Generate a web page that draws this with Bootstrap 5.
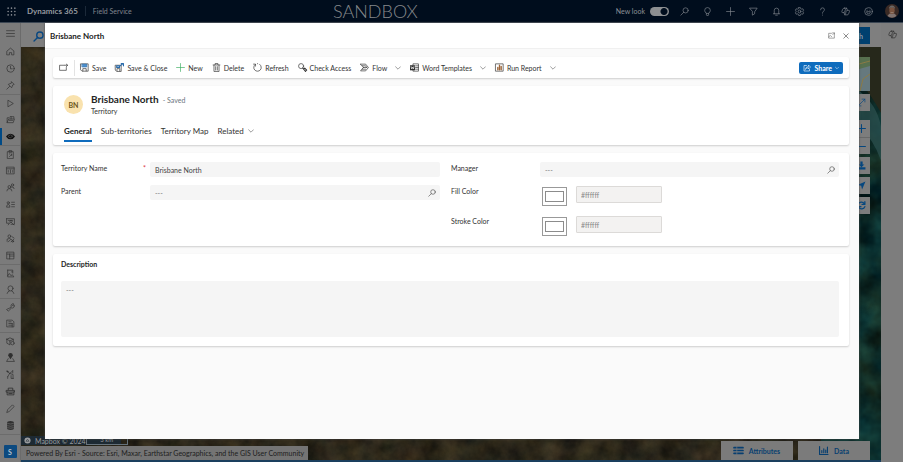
<!DOCTYPE html>
<html lang="en">
<head>
<meta charset="utf-8">
<meta name="viewport" content="width=device-width, initial-scale=1">
<title>Brisbane North - Dynamics 365</title>
<link href="https://cdn.jsdelivr.net/npm/bootstrap@5.3.0/dist/css/bootstrap.min.css" rel="stylesheet">
<style>
  body { font-family: Lato, "Open Sans", sans-serif; font-size: 7px; line-height: 10px; color: #333; background: #7d7d7d; }
  button, input, textarea { font: inherit; color: inherit; }
  button { border: 0; background: none; padding: 0; }
  a { color: inherit; text-decoration: none; }
  svg { display: block; flex: none; }
  .ic { width: 9px; height: 9px; fill: none; stroke: currentColor; stroke-width: 1.2; stroke-linecap: round; stroke-linejoin: round; overflow: visible; }
  .ic .solid { fill: currentColor; stroke: none; }

  .topbar { height: 23px; background: #000d1d; color: #8c9096; border-bottom: 1px solid #3b4653; }
  .topbar-start { flex: 0 0 333px; padding-left: 7px; }
  .product { font-size: 8px; font-weight: 700; padding: 0 7px 0 11px; color: #969a9f; }
  .area { border-left: 1px solid #1b2939; padding-left: 7px; color: #81868d; }
  .env { font-size: 18px; line-height: 22px; font-weight: 300; color: #85888b; }
  .top-icon { width: 23px; height: 22px; color: #7f858c; }
  .switch-track { appearance: none; width: 19px; height: 9px; border-radius: 5px; background: radial-gradient(circle at 14px 50%, #000d1d 3px, transparent 4px) #8d8f91; margin: 0 4px 0 5px; }

  .siderail { width: 21px; background: #7b7b7b; color: #303030; border-right: 1px solid #6b6b6b; }
  .siderail a { height: 17px; }
  .siderail .menu-btn { height: 20px; }
  .siderail .split { border-top: 1px solid #6c6c6c; }
  .siderail .current { box-shadow: inset 2px 0 0 #004a86; color: #111; }
  .siderail .end-split { border-top: 1px solid #6c6c6c; padding-top: 10px; }
  .area-tile { width: 13px; height: 13px; background: #0c4a80; color: #b9c5d0; border-radius: 1px; font-weight: 700; }
  .copilot-rail { width: 22px; background: #7d7d7d; color: #2d2d2d; padding-top: 7px; }

  .map-search { height: 24px; background: #7f7f7f; padding: 4px 11px 3px 12px; color: #0a4880; }
  .map-search svg { stroke-width: 2; }
  .map-search button { background: #00406f; color: #8c9ba8; padding: 0 7px; font-weight: 700; }
  .map-area { overflow: hidden; border-bottom: 2px solid #1a3f5e; background: #29281c; }
  .map-picture { position: absolute; inset: 0; width: 100%; height: 100%; }
  .map-tools { position: absolute; top: 10px; right: 11px; width: 17px; color: #06477f; }
  .map-tools button, .map-thumb { background: #7d7d7d; height: 17px; }
  .map-tools button { margin-top: 3px; }
  .map-tools .zoom-in { margin-top: 9px; }
  .map-tools .zoom-out { margin-top: 0; border-top: 1px solid #696969; }
  .map-thumb { height: 34px; }
  .map-credit { position: absolute; left: 0; bottom: 0; color: #8f949a; }
  .credit-small { height: 9px; width: 100px; background: #1d2a33; padding-left: 3px; color: #9a9c9e; white-space: nowrap; }
  .scale-box { width: 42px; height: 8px; border: 1px solid #66737c; border-top: 0; font-size: 6px; line-height: 6px; }
  .powered { height: 14px; background: #747474; color: #1d1d1d; padding: 2px 4px 0 5px; margin-top: 1px; }
  .map-tabs { position: absolute; right: 11px; bottom: 0; gap: 5px; }
  .map-tabs button { width: 72px; height: 19px; background: #7b7b7b; color: #083f70; font-size: 7px; font-weight: 700; gap: 6px; }

  .record-dialog { position: absolute; inset: 23px 44px 23px 45px; background: #fafafa; box-shadow: 0 0 2px #444; }
  .dialog-title { height: 26px; background: #fff; border-bottom: 1px solid #f0f0f0; padding: 0 10px 0 5px; font-weight: 700; font-size: 8px; color: #222; }
  .dialog-title button { color: #555; }
  .dialog-body { padding: 8px 10px 8px 8px; gap: 8px; }
  .panel { background: #fff; border-radius: 2px; box-shadow: 0 1px 2px #0000002e; }
  .commands { height: 21px; padding: 0 6px; gap: 9px; }
  .commands button { gap: 3px; white-space: nowrap; }
  .commands .pop { border-right: 1px solid #e3e3e3; padding: 2px 6px 2px 0; margin-right: -4px; height: 16px; }
  .chev { width: 6px; height: 6px; color: #777; margin-left: 5px; }
  .commands .share { background: #0f6cbd; color: #fff; border-radius: 2px; height: 12px; padding: 0 4px; font-weight: 700; }
  .share .chev { color: #fff; margin-left: 0; width: 4px; height: 4px; }
  .record-head { padding: 7px 11px 3px; }
  .initials { width: 19px; height: 19px; border-radius: 50%; background: #f9e2ae; color: #6b5319; font-weight: 700; }
  .record-name { font-size: 10px; line-height: 13px; font-weight: 700; margin: 0; color: #242424; }
  .tab-strip { gap: 9px; font-size: 8px; line-height: 12px; margin-top: 9px; }
  .tab-strip a { padding-bottom: 3px; border-bottom: 2px solid transparent; }
  .tab-strip .on { font-weight: 700; border-color: #0f6cbd; color: #242424; }
  .fields { padding: 9px 10px 1px 8px; display: grid; grid-template-columns: 379fr 388fr; gap: 11px; }
  .field-row { min-height: 23px; }
  .field-row label { width: 89px; padding: 1px 4px 0 0; }
  .colour-row { min-height: 30px; }
  .lookup { background: #f5f5f5; border-radius: 2px; height: 15px; padding: 0 4px 0 5px; color: #444; }
  .lookup input { border: 0; background: none; min-width: 0; padding: 0; outline: 0; }
  .lookup input::placeholder, .notes::placeholder { color: #777; opacity: 1; }
  .swatch { appearance: none; width: 25px; height: 19px; border: 1px solid #999; background: #fff; padding: 3px 2px; margin: 2px 9px 0 2px; }
  .swatch::-webkit-color-swatch-wrapper { padding: 0; }
  .swatch::-webkit-color-swatch { border: 1px solid #8c8c8c; border-radius: 0; }
  .hex { width: 86px; height: 17px; margin-top: 1px; border: 1px solid #dcdad8; border-radius: 1px; background: #f3f2f1; color: #888; padding: 0 4px; }
  .describe { padding: 5px 10px 9px 8px; }
  .describe label { font-weight: 700; margin-bottom: 12px; color: #242424; }
  .notes { height: 56px; border: 0; border-radius: 2px; background: #f5f5f5; padding: 4px 5px; resize: none; }
</style>
<script src="https://cdn.jsdelivr.net/npm/bootstrap@5.3.0/dist/js/bootstrap.bundle.min.js"></script>
</head>
<body class="vh-100 overflow-hidden position-relative d-flex flex-column">

<svg width="0" height="0" class="position-absolute" aria-hidden="true">
  <symbol id="i-search" viewBox="0 0 16 16"><circle cx="10" cy="6" r="4.6"/><path d="M6.6 9.4L1.5 14.5"/></symbol>
  <symbol id="i-chev" viewBox="0 0 10 10"><path d="M1 3l4 4 4-4"/></symbol>
  <symbol id="i-pop" viewBox="0 0 16 16"><path d="M8 3H1.500v11h13V8M10.500 2H15v4M15 2l-4 4M1.500 11l4-3 3 3"/></symbol>
  <symbol id="i-copilot" viewBox="0 0 16 16"><path d="M6 2h4l1.500 4H14q1.500 0 1 2l-1.500 4q-.5 2-2.500 2H7l-1.500-4H3Q1 10 1.500 8L3 4q.7-2 3-2zM10 2Q8.500 2 8 4L6.500 9Q6 10 5 10M11 6Q9.500 6 9 8l-1 4q-.5 2-1.500 2"/></symbol>
  <symbol id="i-cal" viewBox="0 0 16 16"><path d="M2 2h12v12H2zM2 5.500h12M6.500 5.500V14M6.500 9H14"/></symbol>
</svg>

<header class="topbar d-flex align-items-center flex-shrink-0">
  <div class="topbar-start d-flex align-items-center">
    <button aria-label="App launcher"><svg class="ic" viewBox="0 0 16 16"><g class="solid"><circle cx="2" cy="2" r="1.400"/><circle cx="8" cy="2" r="1.400"/><circle cx="14" cy="2" r="1.400"/><circle cx="2" cy="8" r="1.400"/><circle cx="8" cy="8" r="1.400"/><circle cx="14" cy="8" r="1.400"/><circle cx="2" cy="14" r="1.400"/><circle cx="8" cy="14" r="1.400"/><circle cx="14" cy="14" r="1.400"/></g></svg></button>
    <a href="#" class="product">Dynamics 365</a>
    <a href="#" class="area">Field Service</a>
  </div>
  <div class="env flex-grow-1">SANDBOX</div>
  <label for="newlook">New look</label>
  <input id="newlook" class="switch-track" type="checkbox" role="switch" checked>
  <nav class="d-flex" aria-label="Tools">
    <button class="top-icon d-flex align-items-center justify-content-center" aria-label="Search"><svg class="ic"><use href="#i-search"/></svg></button>
    <button class="top-icon d-flex align-items-center justify-content-center" aria-label="Tips"><svg class="ic" viewBox="0 0 16 16"><path d="M5.500 11Q3 9 3 6a5 5 0 0 1 10 0q0 3-2.500 5zM6 11v3q0 1 1 1h2q1 0 1-1v-3"/></svg></button>
    <button class="top-icon d-flex align-items-center justify-content-center" aria-label="Add"><svg class="ic" viewBox="0 0 16 16"><path d="M8 1v14M1 8h14"/></svg></button>
    <button class="top-icon d-flex align-items-center justify-content-center" aria-label="Filter"><svg class="ic" viewBox="0 0 16 16"><path d="M1.500 2h13L10 8.500V12l-4 2.500v-6z"/></svg></button>
    <button class="top-icon d-flex align-items-center justify-content-center" aria-label="Notifications"><svg class="ic" viewBox="0 0 16 16"><path d="M4 12V6a4 4 0 0 1 8 0v6M2.500 12h11M6.500 14.500h3"/></svg></button>
    <button class="top-icon d-flex align-items-center justify-content-center" aria-label="Settings"><svg class="ic" viewBox="0 0 16 16"><path d="M6.500 1h3l.5 2 2 .8 2-.6 1.300 2.500L14 7.200v1.600l1.300 1.500-1.300 2.500-2-.6-2 .8-.5 2h-3L6 13l-2-.8-2 .6-1.300-2.500L2 8.800V7.200L.7 5.700 2 3.200l2 .6L6 3z"/><circle cx="8" cy="8" r="2.500"/></svg></button>
    <button class="top-icon d-flex align-items-center justify-content-center" aria-label="Help"><svg class="ic" viewBox="0 0 16 16"><path d="M4.500 5Q4.500 1.500 8 1.500T11.500 5Q11.500 6.500 9.500 7.800 8 8.800 8 11M8 14.300v.2"/></svg></button>
    <button class="top-icon d-flex align-items-center justify-content-center" aria-label="Copilot"><svg class="ic"><use href="#i-copilot"/></svg></button>
    <button class="top-icon d-flex align-items-center justify-content-center" aria-label="Feedback"><svg class="ic" viewBox="0 0 16 16"><circle cx="8" cy="8" r="6.800"/><path d="M4.500 9q.5 3 3.500 3t3.500-3zM5.500 5.700v.3M10.500 5.700v.3"/></svg></button>
    <button class="top-icon d-flex align-items-center justify-content-center" aria-label="Account"><svg width="14" height="14" viewBox="0 0 14 14"><circle cx="7" cy="7" r="7" fill="#3a2a25"/><path d="M2.500 12Q4 9 7 9t4.500 3A7 7 0 0 1 2.500 12z" fill="#807370"/><ellipse cx="7" cy="6.500" rx="2.700" ry="3.500" fill="#79533f"/><path d="M4 5q0-3.500 3-3.500T10 5L8.500 3.500h-3z" fill="#6b6866"/><path d="M5.500 8.500h3" stroke="#a08c80" stroke-width=".7"/></svg></button>
  </nav>
</header>

<div class="d-flex flex-grow-1">
  <nav class="siderail d-flex flex-column flex-shrink-0" aria-label="Site map">
    <a href="#" class="menu-btn d-flex align-items-center justify-content-center" aria-label="Menu"><svg class="ic" viewBox="0 0 16 16"><path d="M1 3h14M1 8h14M1 13h14"/></svg></a>
    <a href="#" class="d-flex align-items-center justify-content-center" aria-label="Home"><svg class="ic" viewBox="0 0 16 16"><path d="M2 7l6-5 6 5v7h-4v-4H6v4H2z"/></svg></a>
    <a href="#" class="d-flex align-items-center justify-content-center" aria-label="Recent"><svg class="ic" viewBox="0 0 16 16"><circle cx="8" cy="8" r="6.500"/><path d="M8 4v4.500h3"/></svg></a>
    <a href="#" class="d-flex align-items-center justify-content-center" aria-label="Pinned"><svg class="ic" viewBox="0 0 16 16"><path d="M10 1.500L14.500 6 12 7l-2 5-6-6 5-2zM6.500 9.500L1.500 14.500"/></svg></a>
    <a href="#" class="split d-flex align-items-center justify-content-center" aria-label="Get started"><svg class="ic" viewBox="0 0 16 16"><path d="M4 2.500l9 5.500-9 5.500z"/></svg></a>
    <a href="#" class="d-flex align-items-center justify-content-center" aria-label="Schedule board"><svg class="ic" viewBox="0 0 16 16"><path d="M2 13V5h3l2-2h7v3M2 13l3-6h10l-2 6zM6 9.500h6"/><path d="M9 3v4"/></svg></a>
    <a href="#" class="current d-flex align-items-center justify-content-center" aria-label="Territory map"><svg class="ic" viewBox="0 0 16 16"><path class="solid" d="M0 8q3-5 8-5t8 5q-3 5-8 5T0 8z"/><path d="M4 7.500L8 5l4 2.500L8 10z" stroke="#555"/></svg></a>
    <a href="#" class="split d-flex align-items-center justify-content-center" aria-label="Work orders"><svg class="ic" viewBox="0 0 16 16"><path d="M3 3h10v12H3zM6 1h4v3H6zM6 12l4-4M10 7v3M6 7h1"/></svg></a>
    <a href="#" class="d-flex align-items-center justify-content-center" aria-label="Bookings"><svg class="ic" viewBox="0 0 16 16"><path d="M1.500 2h13v12h-13zM1.500 5h13M8 7v5M4 8v3M12 8v3"/></svg></a>
    <a href="#" class="d-flex align-items-center justify-content-center" aria-label="Accounts"><svg class="ic" viewBox="0 0 16 16"><circle cx="6" cy="7" r="2.500"/><path d="M1.500 14q0-4 4.500-4t4.500 4"/><circle cx="11.500" cy="3.500" r="2"/><path d="M10 7q4-1 4.500 3"/></svg></a>
    <a href="#" class="d-flex align-items-center justify-content-center" aria-label="Contacts"><svg class="ic" viewBox="0 0 16 16"><circle cx="4" cy="5" r="2"/><path d="M1 12q0-4 3-4t3 4zM10 4h5M10 8h5M10 12h5"/></svg></a>
    <a href="#" class="d-flex align-items-center justify-content-center" aria-label="Assets"><svg class="ic" viewBox="0 0 16 16"><path d="M1 3h14v10H9M1 3v8h4M4 6h8M9 10a2 2 0 1 0-.1 0M7 10l-3 4M10 10l4 4"/></svg></a>
    <a href="#" class="d-flex align-items-center justify-content-center" aria-label="Resources"><svg class="ic" viewBox="0 0 16 16"><circle cx="6" cy="4" r="2.500"/><path d="M2 13V9l4-1 4 2M4 14l4-4M9 14l5-5M11 5l3 2"/><circle cx="12" cy="13" r="1.500"/></svg></a>
    <a href="#" class="d-flex align-items-center justify-content-center" aria-label="Time off"><svg class="ic"><use href="#i-cal"/></svg></a>
    <a href="#" class="split d-flex align-items-center justify-content-center" aria-label="Cases"><svg class="ic" viewBox="0 0 16 16"><path d="M3 2h9v5M3 2v12h11l-3-4-2 2-3-4-3 4M10 5h1"/></svg></a>
    <a href="#" class="d-flex align-items-center justify-content-center" aria-label="Users"><svg class="ic" viewBox="0 0 16 16"><circle cx="8" cy="6" r="4.500"/><path d="M2 15q1-4 4-4.500M14 15q-1-4-4-4.500"/></svg></a>
    <a href="#" class="split d-flex align-items-center justify-content-center" aria-label="Service"><svg class="ic" viewBox="0 0 16 16"><path d="M9 7Q8 3 11 1.500q2-.7 3 .5L11.500 4l1 1.500L15 4q.5 3-2 4.500-1.500.8-3 .2L4 14.500 1.500 12z"/></svg></a>
    <a href="#" class="d-flex align-items-center justify-content-center" aria-label="Agreements"><svg class="ic" viewBox="0 0 16 16"><path d="M2 2h9l3 3v9H2zM5 5h4M5 8h6M5 11h6M11 8v6"/></svg></a>
    <a href="#" class="split d-flex align-items-center justify-content-center" aria-label="Products"><svg class="ic" viewBox="0 0 16 16"><path d="M1.500 4L7 1.500 13 4v4M1.500 4v7L7 14V7L1.500 4zM7 7l6-3"/><circle cx="11.500" cy="11" r="3"/></svg></a>
    <a href="#" class="d-flex align-items-center justify-content-center" aria-label="Locations"><svg class="ic" viewBox="0 0 16 16"><path class="solid" d="M8 0a4 4 0 0 1 4 4q0 2-4 7-4-5-4-7a4 4 0 0 1 4-4z"/><path d="M4 10l-3 5h14l-3-5"/></svg></a>
    <a href="#" class="d-flex align-items-center justify-content-center" aria-label="Regions"><svg class="ic" viewBox="0 0 16 16"><path d="M1.500 2l5 4 5-4M6.500 6L3 12M6.500 6l6 2v7M3 12v3M9 10v5h4M12 1v4"/><circle cx="2.500" cy="2.500" r="1"/></svg></a>
    <a href="#" class="d-flex align-items-center justify-content-center" aria-label="Vehicles"><svg class="ic" viewBox="0 0 16 16"><path d="M4 5V2h8v3M1 6h14v3H1zM2 9v5h12V9M5 11.500h6" stroke-width="1.500"/></svg></a>
    <a href="#" class="d-flex align-items-center justify-content-center" aria-label="Edit"><svg class="ic" viewBox="0 0 16 16"><path d="M1.500 14.500L3 10l8.500-8.500 3 3L6 13z"/></svg></a>
    <a href="#" class="d-flex align-items-center justify-content-center" aria-label="Data"><svg class="ic" viewBox="0 0 16 16"><path class="solid" d="M2 3q0-3 6-3t6 3v10q0 3-6 3t-6-3z"/><path d="M3 4.500q5 2 10 0M3 8.500q5 2 10 0M3 12q5 2 10 0" stroke="#7b7b7b" stroke-width="1"/></svg></a>
    <div class="end-split d-flex justify-content-center"><button class="area-tile d-flex align-items-center justify-content-center">S</button></div>
  </nav>

  <main class="flex-grow-1 d-flex flex-column">
    <div class="map-search d-flex justify-content-between">
      <svg class="ic mt-1" style="width:11px;height:11px"><use href="#i-search"/></svg>
      <button>Search</button>
    </div>
    <div class="map-area flex-grow-1 position-relative">
      <svg class="map-picture" viewBox="0 0 860 415" preserveAspectRatio="none" aria-hidden="true">
        <defs>
          <filter id="ground" x="0" y="0" width="100%" height="100%" color-interpolation-filters="sRGB"><feTurbulence type="fractalNoise" baseFrequency=".05" numOctaves="5" seed="8"/><feColorMatrix values=".2 .1 0 0 .02  .14 .12 0 0 .02  .08 .08 .04 0 0  0 0 0 0 1"/></filter>
          <filter id="water" x="0" y="0" width="100%" height="100%" color-interpolation-filters="sRGB"><feTurbulence type="fractalNoise" baseFrequency=".03" numOctaves="4" seed="3"/><feColorMatrix values=".2 0 0 0 -.05  .3 .2 0 0 -.08  .2 .25 0 0 -.07  0 0 0 0 1"/></filter>
        </defs>
        <rect width="860" height="415" filter="url(#ground)"/>
        <rect x="800" width="60" height="415" filter="url(#water)"/>
        <path d="M836 0h24v66q-8-14-14-22T836 30z" fill="#26281b"/>
        <path d="M838 44q18 14 22 36v34q-8-22-22-34z" fill="#2e5150" opacity=".7"/>
      </svg>
      <div class="map-tools d-flex flex-column">
        <svg class="map-thumb w-100" viewBox="0 0 17 34" preserveAspectRatio="none"><path fill="#66797e" d="M0 0h17v34H0z"/><path fill="#57704f" d="M6 0h11v9L6 12z"/><path d="M6 7l11-3M7 34l3-12 7-5" stroke="#8c7b45" fill="none"/></svg>
        <button class="d-flex align-items-center justify-content-center" aria-label="Full extent"><svg class="ic" viewBox="0 0 16 16"><path d="M2 14L14 2M9 2h5v5M2 9v5h5"/></svg></button>
        <button class="zoom-in d-flex align-items-center justify-content-center" aria-label="Zoom in"><svg class="ic" viewBox="0 0 16 16"><path d="M8 1v14M1 8h14" stroke-width="1.800"/></svg></button>
        <button class="zoom-out d-flex align-items-center justify-content-center" aria-label="Zoom out"><svg class="ic" viewBox="0 0 16 16"><path d="M1 8h14" stroke-width="1.800"/></svg></button>
        <button class="d-flex align-items-center justify-content-center" aria-label="Download"><svg class="ic" viewBox="0 0 16 16"><path class="solid" d="M6 1h4v5h3l-5 5-5-5h3zM1 11h14v4H1z"/></svg></button>
        <button class="d-flex align-items-center justify-content-center" aria-label="Locate"><svg class="ic" viewBox="0 0 16 16"><path class="solid" d="M15 1L9 15 7.500 8.500 1 7z"/></svg></button>
        <button class="d-flex align-items-center justify-content-center" aria-label="Refresh map"><svg class="ic" viewBox="0 0 16 16"><path d="M2 6a6 6 0 0 1 11-1M14 1v5H9M14 10A6 6 0 0 1 3 11M2 15v-5h5" stroke-width="2.200"/></svg></button>
      </div>
      <div class="map-credit">
        <div class="credit-small d-flex align-items-center"><svg class="ic me-1" style="width:7px;height:7px" viewBox="0 0 16 16"><circle class="solid" cx="8" cy="8" r="7"/><path d="M5 9l3-4 3 4z" stroke="#1d2a33"/></svg><span class="flex-grow-1">Mapbox © 2024</span><span class="scale-box text-center flex-shrink-0">3 km</span></div>
        <div class="powered">Powered By Esri - Source: Esri, Maxar, Earthstar Geographics, and the GIS User Community</div>
      </div>
      <div class="map-tabs d-flex">
        <button class="d-flex align-items-center justify-content-center"><svg class="ic" viewBox="0 0 16 16"><path d="M0 3h16M0 8h16M0 13h16" stroke-width="3"/><path d="M5 1v14" stroke="#7b7b7b"/></svg>Attributes</button>
        <button class="d-flex align-items-center justify-content-center"><svg class="ic" viewBox="0 0 16 16"><path d="M1 1v14h15M5 12V8M8.500 12V5M12 12V7M15 12V2" stroke-width="2"/></svg>Data</button>
      </div>
    </div>
  </main>
  <aside class="copilot-rail flex-shrink-0 d-flex justify-content-center"><button class="align-self-start" aria-label="Copilot pane"><svg class="ic"><use href="#i-copilot"/></svg></button></aside>
</div>

<section class="record-dialog" role="dialog" aria-label="Brisbane North">
  <div class="dialog-title d-flex align-items-center">
    <span class="flex-grow-1">Brisbane North</span>
    <button class="me-1" aria-label="Open in window"><svg class="ic" style="width:7px;height:7px"><use href="#i-pop"/></svg></button>
    <button class="ms-1" aria-label="Close"><svg class="ic" style="width:6px;height:6px" viewBox="0 0 16 16"><path d="M2 2l12 12M14 2L2 14" stroke-width="1.800"/></svg></button>
  </div>
  <div class="dialog-body d-flex flex-column">
    <div class="panel commands d-flex align-items-center" role="toolbar" aria-label="Commands">
      <button class="pop d-flex align-items-center" aria-label="Open record"><svg class="ic" viewBox="0 0 16 16"><path d="M9 4H1v9h12V8M10 4h5M13 2l2.500 2L13 6.500"/></svg></button>
      <button class="d-flex align-items-center"><svg class="ic" viewBox="0 0 16 16"><path d="M1.500 1.500h13v13h-11l-2-2z"/><path d="M4 2h8v5H4z" fill="#4a90d0" stroke="#2b6cab"/><path d="M5 14v-4h6v4"/></svg>Save</button>
      <button class="d-flex align-items-center"><svg class="ic" viewBox="0 0 16 16"><path d="M1 4h10v11H3l-2-2zM3.500 14v-4h5v4"/><path d="M3 5h5v3H3zM8 6l6-5M11 1h4v4" stroke="#2b6cab" stroke-width="2"/></svg>Save &amp; Close</button>
      <button class="d-flex align-items-center"><svg class="ic" viewBox="0 0 16 16"><path d="M8 1v14M1 8h14" stroke="#3fae62"/></svg>New</button>
      <button class="d-flex align-items-center"><svg class="ic" viewBox="0 0 16 16"><path d="M2 3.500h12M5.500 3V1h5v2M3.500 4v11h9V4M6.500 6.500v6M9.500 6.500v6"/></svg>Delete</button>
      <button class="d-flex align-items-center"><svg class="ic" viewBox="0 0 16 16"><path d="M4 2.500a6.700 6.700 0 1 0 8 0M1 2h3.500v3.500M8 1.200h.3"/></svg>Refresh</button>
      <button class="d-flex align-items-center"><svg class="ic" viewBox="0 0 16 16"><circle cx="5.500" cy="5.500" r="4.500"/><path d="M8.500 9l5 6M10 11l2-2 3.500 3.500L13 15" stroke-width="1.800"/></svg>Check Access</button>
      <button class="d-flex align-items-center"><svg class="ic" viewBox="0 0 16 16"><path d="M1 2h9l5 6-5 6H1l5-6zM4 5h6l2 3M6 8h6M4 11h6"/></svg>Flow<svg class="ic chev"><use href="#i-chev"/></svg></button>
      <button class="d-flex align-items-center"><svg class="ic" viewBox="0 0 16 16"><path d="M6 1.500h9v13H6zM10 5h5M10 8h5M10 11h5"/><path class="solid" d="M0 4h9v9H0z"/><path d="M2 6.500l1 4 1.500-3 1.500 3 1-4" stroke="#fff"/></svg>Word Templates<svg class="ic chev"><use href="#i-chev"/></svg></button>
      <button class="d-flex align-items-center"><svg class="ic" viewBox="0 0 16 16"><path d="M1.500 1.500h13v13h-13z"/><path d="M5 12V8M8 12V4M11 12V6" stroke="#9c6438" stroke-width="2.400"/></svg>Run Report<svg class="ic chev"><use href="#i-chev"/></svg></button>
      <button class="share d-flex align-items-center ms-auto"><svg class="ic" style="width:8px;height:8px" viewBox="0 0 16 16"><path d="M7 3H2v11h11v-3M5 10q1-5 6-5V2l4 4-4 4V7.500Q7 7.500 5 10z"/></svg>Share<svg class="ic chev"><use href="#i-chev"/></svg></button>
    </div>

    <div class="panel record-head">
      <div class="d-flex align-items-center">
        <div class="initials d-flex align-items-center justify-content-center">BN</div>
        <div class="ps-2">
          <div class="d-flex align-items-baseline"><h1 class="record-name">Brisbane North</h1><span class="text-secondary ms-1">- Saved</span></div>
          <div>Territory</div>
        </div>
      </div>
      <nav class="tab-strip d-flex" aria-label="Form tabs">
        <a href="#" class="on">General</a><a href="#">Sub-territories</a><a href="#">Territory Map</a><a href="#" class="d-flex align-items-center">Related<svg class="ic chev ms-1"><use href="#i-chev"/></svg></a>
      </nav>
    </div>

    <form class="panel fields">
      <div>
        <div class="field-row d-flex align-items-start">
          <label class="d-flex justify-content-between" for="tname">Territory Name<span class="text-danger">*</span></label>
          <div class="lookup flex-grow-1 d-flex align-items-center"><input class="flex-grow-1" id="tname" value="Brisbane North"></div>
        </div>
        <div class="field-row d-flex align-items-start">
          <label for="parent">Parent</label>
          <div class="lookup flex-grow-1 d-flex align-items-center"><input class="flex-grow-1" id="parent" placeholder="---"><svg class="ic" style="width:8px;height:8px"><use href="#i-search"/></svg></div>
        </div>
      </div>
      <div>
        <div class="field-row d-flex align-items-start">
          <label for="manager">Manager</label>
          <div class="lookup flex-grow-1 d-flex align-items-center"><input class="flex-grow-1" id="manager" placeholder="---"><svg class="ic" style="width:8px;height:8px"><use href="#i-search"/></svg></div>
        </div>
        <div class="field-row colour-row d-flex align-items-start">
          <label for="fill">Fill Color</label>
          <input class="swatch" type="color" id="fill" value="#ffffff"><input class="hex" aria-label="Fill color value" value="#ffffff" disabled>
        </div>
        <div class="field-row colour-row d-flex align-items-start">
          <label for="stroke">Stroke Color</label>
          <input class="swatch" type="color" id="stroke" value="#ffffff"><input class="hex" aria-label="Stroke color value" value="#ffffff" disabled>
        </div>
      </div>
    </form>

    <div class="panel describe d-flex flex-column">
      <label for="notes">Description</label>
      <textarea class="notes" id="notes" placeholder="---"></textarea>
    </div>
  </div>
</section>
</body>
</html>
